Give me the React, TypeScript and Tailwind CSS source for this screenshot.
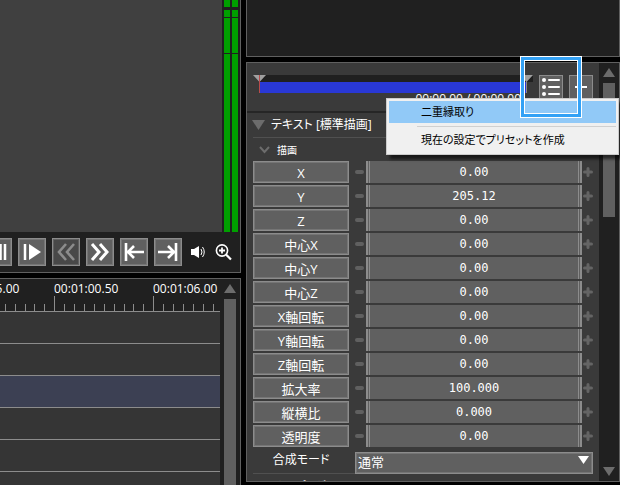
import React from 'react';

const properties = [
  ['X', '0.00'],
  ['Y', '205.12'],
  ['Z', '0.00'],
  ['中心X', '0.00'],
  ['中心Y', '0.00'],
  ['中心Z', '0.00'],
  ['X軸回転', '0.00'],
  ['Y軸回転', '0.00'],
  ['Z軸回転', '0.00'],
  ['拡大率', '100.000'],
  ['縦横比', '0.000'],
  ['透明度', '0.00'],
];

function ArrowUp() {
  return (
    <svg className="h-[9px] w-3 shrink-0" viewBox="0 0 12 9" aria-hidden="true">
      <path d="M6 0 12 9H0Z" fill="#6c6c6c" />
    </svg>
  );
}

function ArrowDown() {
  return (
    <svg className="h-[9px] w-3 shrink-0" viewBox="0 0 12 9" aria-hidden="true">
      <path d="M0 0H12L6 9Z" fill="#6c6c6c" />
    </svg>
  );
}

function ToolButton({ label, disabled, children }: { label: string; disabled?: boolean; children: React.ReactNode }) {
  return (
    <button
      type="button"
      aria-label={label}
      disabled={disabled}
      className="h-7 w-7 shrink-0 border border-[#8c8c8c] bg-[#606060] text-white ring-1 ring-inset ring-[#757575] disabled:bg-[#484848] disabled:text-[#8c8c8c] disabled:ring-[#606060]"
    >
      <svg viewBox="0 0 26 26" className="h-[26px] w-[26px]" fill="none" stroke="currentColor" strokeWidth="3">
        {children}
      </svg>
    </button>
  );
}

function Meter() {
  return (
    <div className="flex w-1.5 flex-col">
      <div className="h-[7px] bg-[#00a000]" />
      <div className="mt-[3px] h-[7px] bg-[#00a000]" />
      <div className="mt-px h-[35px] bg-[#00a000]" />
      <div className="mt-px flex-1 bg-[#00a000]" />
    </div>
  );
}

function Preview() {
  return (
    <section className="border-r border-b border-[#606060] bg-[#202020]">
      <div className="flex h-[232px]">
        <div className="flex-1 bg-[#404040]" />
        <div className="flex gap-0.5 px-0.5">
          <Meter />
          <Meter />
        </div>
      </div>
      <div className="flex h-10 items-center justify-end gap-1.5 pr-2">
        <ToolButton label="一時停止">
          <path d="M15.5 5V21M20 5V21" strokeWidth="2.5" />
        </ToolButton>
        <ToolButton label="再生">
          <path d="M6 5V21" strokeWidth="2.5" />
          <path d="M10 5 22 13 10 21Z" fill="currentColor" stroke="none" />
        </ToolButton>
        <ToolButton label="前のフレーム" disabled>
          <path d="M13 5 6 13 13 21M21 5 14 13 21 21" strokeWidth="2.6" />
        </ToolButton>
        <ToolButton label="次のフレーム">
          <path d="M5 5 12 13 5 21M13 5 20 13 13 21" strokeWidth="3" />
        </ToolButton>
        <ToolButton label="先頭へ">
          <path d="M5 4V22M7 13H23M13 7 7 13 13 19" strokeWidth="2.6" />
        </ToolButton>
        <ToolButton label="末尾へ">
          <path d="M21 4V22M3 13H19M13 7 19 13 13 19" strokeWidth="2.6" />
        </ToolButton>
        <button type="button" aria-label="音量" className="ml-0.5 h-4 w-4 shrink-0">
          <svg viewBox="0 0 16 16" className="h-4 w-4" fill="none" stroke="#fff">
            <path d="M1 5H4V11H1ZM4 5 9 2V14L4 11Z" fill="#fff" stroke="none" />
            <path d="M11 5Q13 8 11 11M12.5 3Q16 8 12.5 13" />
          </svg>
        </button>
        <button type="button" aria-label="拡大" className="ml-0.5 h-[18px] w-[18px] shrink-0">
          <svg viewBox="0 0 18 18" className="h-[18px] w-[18px]" fill="none" stroke="#fff">
            <circle cx="8" cy="7.5" r="5.6" strokeWidth="1.6" />
            <path d="M12 11.5 17 16.5" strokeWidth="2.2" />
            <path d="M5 7.5H11M8 4.5V10.5" strokeWidth="1.8" />
          </svg>
        </button>
      </div>
    </section>
  );
}

function Timeline() {
  const ticks = [5, 15, 25, 34, 44, 54, 64, 74, 84, 94, 104, 114, 124, 133, 143, 153, 163, 173, 183, 193, 203, 213];
  return (
    <section className="flex min-h-0 flex-1 border-t border-r border-[#606060] bg-[#202020]">
      <div className="flex min-w-0 flex-1 flex-col">
        <div className="flex h-[17px] justify-end overflow-hidden pt-0.5 pr-0.5 text-xs leading-4 whitespace-nowrap text-white">
          <span className="w-[99px] shrink-0">00:00:55.00</span>
          <span className="w-[99px] shrink-0">00:01:00.50</span>
          <span className="w-[65px] shrink-0">00:01:06.00</span>
        </div>
        <svg className="h-4 w-full shrink-0" aria-hidden="true">
          {ticks.map((x) => (
            <rect key={x} x={x} y={x === 54 || x === 153 ? 0 : 8} width="1" height="16" fill="#8c8c8c" />
          ))}
          <rect y="15" width="100%" height="1" fill="#8c8c8c" />
        </svg>
        <div className="h-8 shrink-0 border-b border-[#8c8c8c] bg-[#353535]" />
        <div className="h-8 shrink-0 border-b border-[#8c8c8c] bg-[#353535]" />
        <div className="h-8 shrink-0 border-b border-[#8c8c8c] bg-[#3c4053]" />
        <div className="h-8 shrink-0 border-b border-[#8c8c8c] bg-[#353535]" />
        <div className="h-8 shrink-0 border-b border-[#8c8c8c] bg-[#353535]" />
        <div className="flex-1 bg-[#353535]" />
      </div>
      <div className="flex w-5 flex-col items-center pt-[5px]">
        <ArrowUp />
        <div className="mt-1.5 w-3 flex-1 bg-[#606060]" />
      </div>
    </section>
  );
}

function PropertyRow({ label, value }: { label: string; value: string }) {
  return (
    <div className="flex h-[22px] items-center">
      <button
        type="button"
        className="h-full w-24 shrink-0 border border-[#8c8c8c] bg-[#606060] pt-0.5 text-[13px] leading-4 text-white ring-1 ring-inset ring-[#757575]"
      >
        {label}
      </button>
      <button type="button" aria-label={`${label}を減らす`} className="flex w-[17px] shrink-0 justify-center">
        <span className="ml-1 h-1 w-[9px] rounded-sm bg-[#606060]" />
      </button>
      <div className="flex h-full min-w-0 flex-1 border-x-2 border-[#8c8c8c] bg-[#606060] px-px">
        <input
          aria-label={label}
          defaultValue={value}
          className="w-full min-w-0 border-x border-[#8c8c8c] bg-transparent text-center font-['DejaVu_Sans_Mono',monospace] text-xs text-white outline-none"
        />
      </div>
      <button type="button" aria-label={`${label}を増やす`} className="w-[11px] shrink-0 pl-px">
        <svg viewBox="0 0 10 10" className="h-2.5 w-2.5">
          <path d="M5 1.5V8.5M1.5 5H8.5" stroke="#646464" strokeWidth="3" strokeLinecap="round" />
        </svg>
      </button>
    </div>
  );
}

function PresetMenu() {
  return (
    <div
      role="menu"
      className="absolute top-[35px] right-0 left-[139px] border border-[#ccc] bg-[#f0f0f0] p-0.5 text-[11px] text-black shadow-[4px_4px_3px_#0009] [font-feature-settings:'palt']"
    >
      <button type="button" role="menuitem" className="block h-[22px] w-full bg-[#91c9f7] pl-8 text-left">
        二重縁取り
      </button>
      <div className="mt-[3px] mb-px ml-7 h-px bg-[#d0d0d0]" />
      <button type="button" role="menuitem" className="block h-6 w-full pl-8 text-left">
        現在の設定でプリセットを作成
      </button>
    </div>
  );
}

function PresetBar() {
  return (
    <div className="flex h-12 shrink-0 items-start pt-3 pr-1.5 pl-1.5">
      <div className="min-w-0 flex-1">
        <svg className="block h-[18px] w-full" aria-hidden="true">
          <rect x="6" y="-1" width="100%" height="8" fill="#202020" />
          <rect x="6" y="7" width="267" height="11" fill="#2938d5" />
          <path d="M0 0H13L6.5 7Z" fill="#a0a0a0" />
          <rect x="6" y="0" width="1" height="18" fill="#b84b4b" />
          <path d="M267 0H280L273.5 7Z" fill="#a0a0a0" />
          <rect x="273" y="6" width="1" height="12" fill="#8c8c8c" />
        </svg>
        <div className="pr-3 text-right text-xs leading-3 whitespace-nowrap text-white">
          00:00.00 / 00:00.00
        </div>
      </div>
      <div className="flex gap-1.5 pl-1.5">
        <button type="button" aria-label="プリセット一覧" className="h-6 w-6 border border-[#8c8c8c] bg-[#606060]">
          <svg viewBox="0 0 22 22" className="h-[22px] w-[22px]" fill="#fff" stroke="#fff" strokeWidth="2" strokeLinecap="round">
            <path d="M9 4H19M9 11H19M9 18H19" />
            <g stroke="none">
              <circle cx="4" cy="4" r="2" />
              <circle cx="4" cy="11" r="2" />
              <circle cx="4" cy="18" r="2" />
            </g>
          </svg>
        </button>
        <button type="button" aria-label="追加" className="h-6 w-6 border border-[#8c8c8c] bg-[#606060]">
          <svg viewBox="0 0 22 22" className="h-[22px] w-[22px]" stroke="#fff" strokeWidth="2">
            <path d="M5 11H17M11 5V17" />
          </svg>
        </button>
      </div>
    </div>
  );
}

function Inspector() {
  return (
    <section className="relative flex min-h-0 flex-1 border border-[#606060] bg-[#3a3a3a]">
      <div className="flex min-w-0 flex-1 flex-col overflow-hidden">
        <PresetBar />
        <div className="flex h-[26px] shrink-0 items-center gap-1.5 border-t-2 border-[#262626] pl-[5px] text-white">
          <svg viewBox="0 0 13 10" className="h-2.5 w-[13px]">
            <path d="M0 0H13L6.5 10Z" fill="#6c6c6c" />
          </svg>
          <h2 className="text-xs leading-5 [font-feature-settings:'palt']">テキスト [標準描画]</h2>
        </div>
        <div className="mx-1.5 flex h-6 shrink-0 items-center gap-[7px] border-t border-[#505050] pl-1.5 text-white">
          <svg viewBox="0 0 11 8" className="h-2 w-[11px]">
            <path d="M1 1 5.5 6 10 1" fill="none" stroke="#6c6c6c" strokeWidth="2" />
          </svg>
          <h3 className="text-[10px] leading-4">描画</h3>
        </div>
        <div className="flex shrink-0 flex-col gap-0.5 px-1.5">
          {properties.map(([label, value]) => (
            <PropertyRow key={label} label={label} value={value} />
          ))}
          <div className="flex h-[22px] items-center">
            <label htmlFor="blend" className="w-[102px] pr-1.5 text-center text-xs text-white [font-feature-settings:'palt']">
              合成モード
            </label>
            <div className="relative h-full flex-1">
              <select
                id="blend"
                className="h-full w-full appearance-none border border-[#8c8c8c] bg-[#606060] pb-0.5 pl-0.5 text-[13px] leading-4 text-white ring-1 ring-inset ring-[#757575]"
              >
                <option>通常</option>
              </select>
              <svg viewBox="0 0 11 8" className="pointer-events-none absolute top-[7px] right-1 h-2 w-[11px]">
                <path d="M0 0H11L5.5 8Z" fill="#fff" />
              </svg>
            </div>
          </div>
          <div className="border-t border-[#505050] pt-0.5 pl-6 text-[13px] leading-5 text-white">ｸﾘｯﾋﾟﾝｸﾞ</div>
        </div>
      </div>
      <div className="flex w-5 shrink-0 flex-col items-center bg-[#202020] py-[5px]">
        <ArrowUp />
        <div className="mt-1.5 h-[134px] w-3 bg-[#606060]" />
        <div className="flex-1" />
        <ArrowDown />
      </div>
      <PresetMenu />
      <div className="pointer-events-none absolute -top-[7px] right-[37px] h-[62px] w-[62px] border border-white">
        <div className="h-full border-[3px] border-[#33a1f5]">
          <div className="h-full border border-white" />
        </div>
      </div>
    </section>
  );
}

export default function App() {
  return (
    <main className="flex h-screen overflow-hidden bg-black font-['Open_Sans','Noto_Sans_CJK_JP',sans-serif]">
      <div className="flex w-[241px] shrink-0 flex-col gap-[5px]">
        <Preview />
        <Timeline />
      </div>
      <div className="ml-[5px] flex min-w-0 flex-1 flex-col gap-[5px] pb-[3px]">
        <div className="h-[57px] shrink-0 border-x border-b border-[#606060] bg-[#202020]" />
        <Inspector />
      </div>
    </main>
  );
}
